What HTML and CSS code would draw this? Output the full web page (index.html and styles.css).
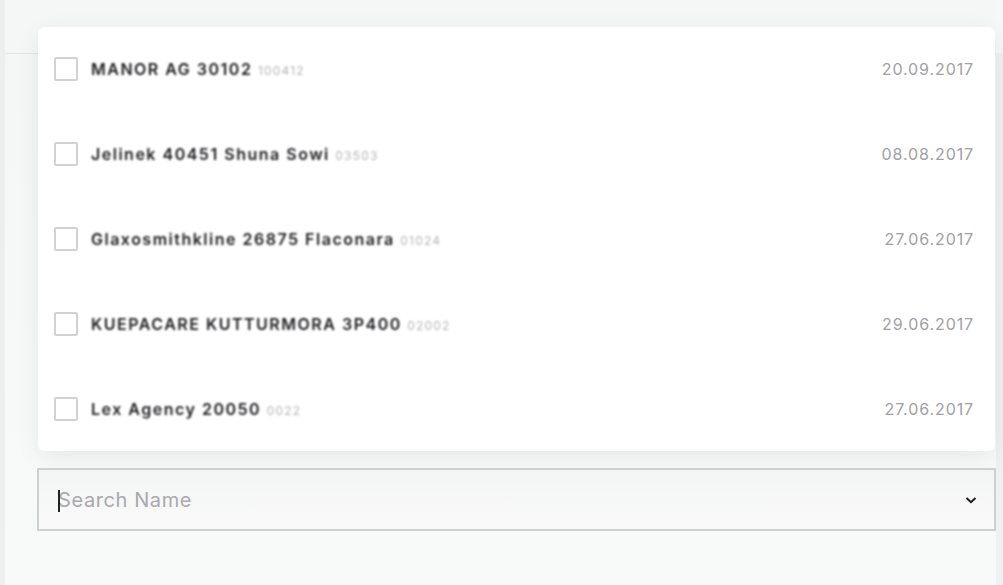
FILE: index.html
```html
<!DOCTYPE html>
<html lang="en">
<head>
  <meta charset="UTF-8">
  <title>Contracts - Search</title>
  <link rel="stylesheet" href="styles.css">
</head>
<body>

<div class="page">
  <div class="side-strip"></div>
  <div class="main">
    <div class="topbar"></div>

    <div class="picker">
      <!-- results list opened above the search field -->
      <ul class="results">
        <li class="result">
          <span class="check"></span>
          <span class="name">MANOR AG 30102 <small>100412</small></span>
          <span class="date">20.09.2017</span>
        </li>
        <li class="result">
          <span class="check"></span>
          <span class="name">Jelinek 40451 Shuna Sowi <small>03503</small></span>
          <span class="date">08.08.2017</span>
        </li>
        <li class="result">
          <span class="check"></span>
          <span class="name">Glaxosmithkline 26875 Flaconara <small>01024</small></span>
          <span class="date">27.06.2017</span>
        </li>
        <li class="result">
          <span class="check"></span>
          <span class="name">KUEPACARE KUTTURMORA 3P400 <small>02002</small></span>
          <span class="date">29.06.2017</span>
        </li>
        <li class="result">
          <span class="check"></span>
          <span class="name">Lex Agency 20050 <small>0022</small></span>
          <span class="date">27.06.2017</span>
        </li>
      </ul>

      <div class="search">
        <span class="caret"></span>
        <input type="text" placeholder="Search Name">
        <svg class="chevron" width="14" height="10" viewBox="0 0 14 10">
          <path d="M2.5 3 L7 7.2 L11.5 3" fill="none" stroke="#1d1d22" stroke-width="2"/>
        </svg>
      </div>
    </div>
  </div>
  <div class="side-strip right"></div>
</div>

</body>
</html>
```

FILE: styles.css
```css
* {
  box-sizing: border-box;
}

body {
  margin: 0;
  font-family: Inter, 'Noto Sans', sans-serif;
  background: #f6f7f7;
  height: 585px;
  overflow: hidden;
}

.page {
  display: flex;
  height: 585px;
}

.side-strip {
  width: 5px;
  background: #eceef0;
  flex: none;
}

.side-strip.right {
  width: 7px;
  margin-top: 53px;
  background: #eff0f2;
}

.main {
  flex: 1;
  position: relative;
  background: linear-gradient(180deg, #f4f5f5 0%, #f7f8f8 60%, #f8f9f9 100%);
}

.topbar {
  height: 54px;
  border-bottom: 1px solid #e4e5e8;
  background: #f5f6f6;
}

.picker {
  position: absolute;
  top: 27px;
  left: 33px;
  right: 0;
}

.results {
  list-style: none;
  margin: 0;
  padding: 0;
  width: 957px;
  height: 424px;
  background: #fff;
  border-radius: 6px;
  box-shadow: 0 6px 24px rgba(0, 0, 0, 0.07);
  display: flex;
  flex-direction: column;
}

.result {
  height: 85px;
  display: flex;
  align-items: center;
  padding: 0 21px 0 16px;
}

.check {
  width: 24px;
  height: 24px;
  border: 2px solid #d2d2d5;
  border-radius: 2px;
  margin-right: 13px;
  flex: none;
}

.name {
  flex: 1;
  font-size: 16px;
  font-weight: 600;
  color: #1c1c20;
  letter-spacing: 1.5px;
  filter: blur(1.1px);
}

.name small {
  font-size: 12px;
  font-weight: 400;
  letter-spacing: 1.2px;
  color: #b5b5b9;
}

.date {
  font-size: 16px;
  color: #a0a0a5;
  letter-spacing: 0.9px;
}

.search {
  position: relative;
  margin-top: 17px;
  margin-left: -1px;
  width: 959px;
  height: 63px;
  border: 2px solid #cfcfd3;
  background: linear-gradient(180deg, #f3f4f4 0%, #fafafa 100%);
  display: flex;
  align-items: center;
  padding: 0 16px 0 19px;
}

.search input {
  flex: 1;
  border: none;
  background: transparent;
  font-family: inherit;
  font-size: 20px;
  letter-spacing: 0.6px;
  color: #333;
  padding: 0;
  outline: none;
}

.search input::placeholder {
  color: #a9a9ae;
}

.caret {
  position: absolute;
  left: 19px;
  top: 20px;
  width: 2px;
  height: 22px;
  background: #222;
}

.chevron {
  flex: none;
}
```
